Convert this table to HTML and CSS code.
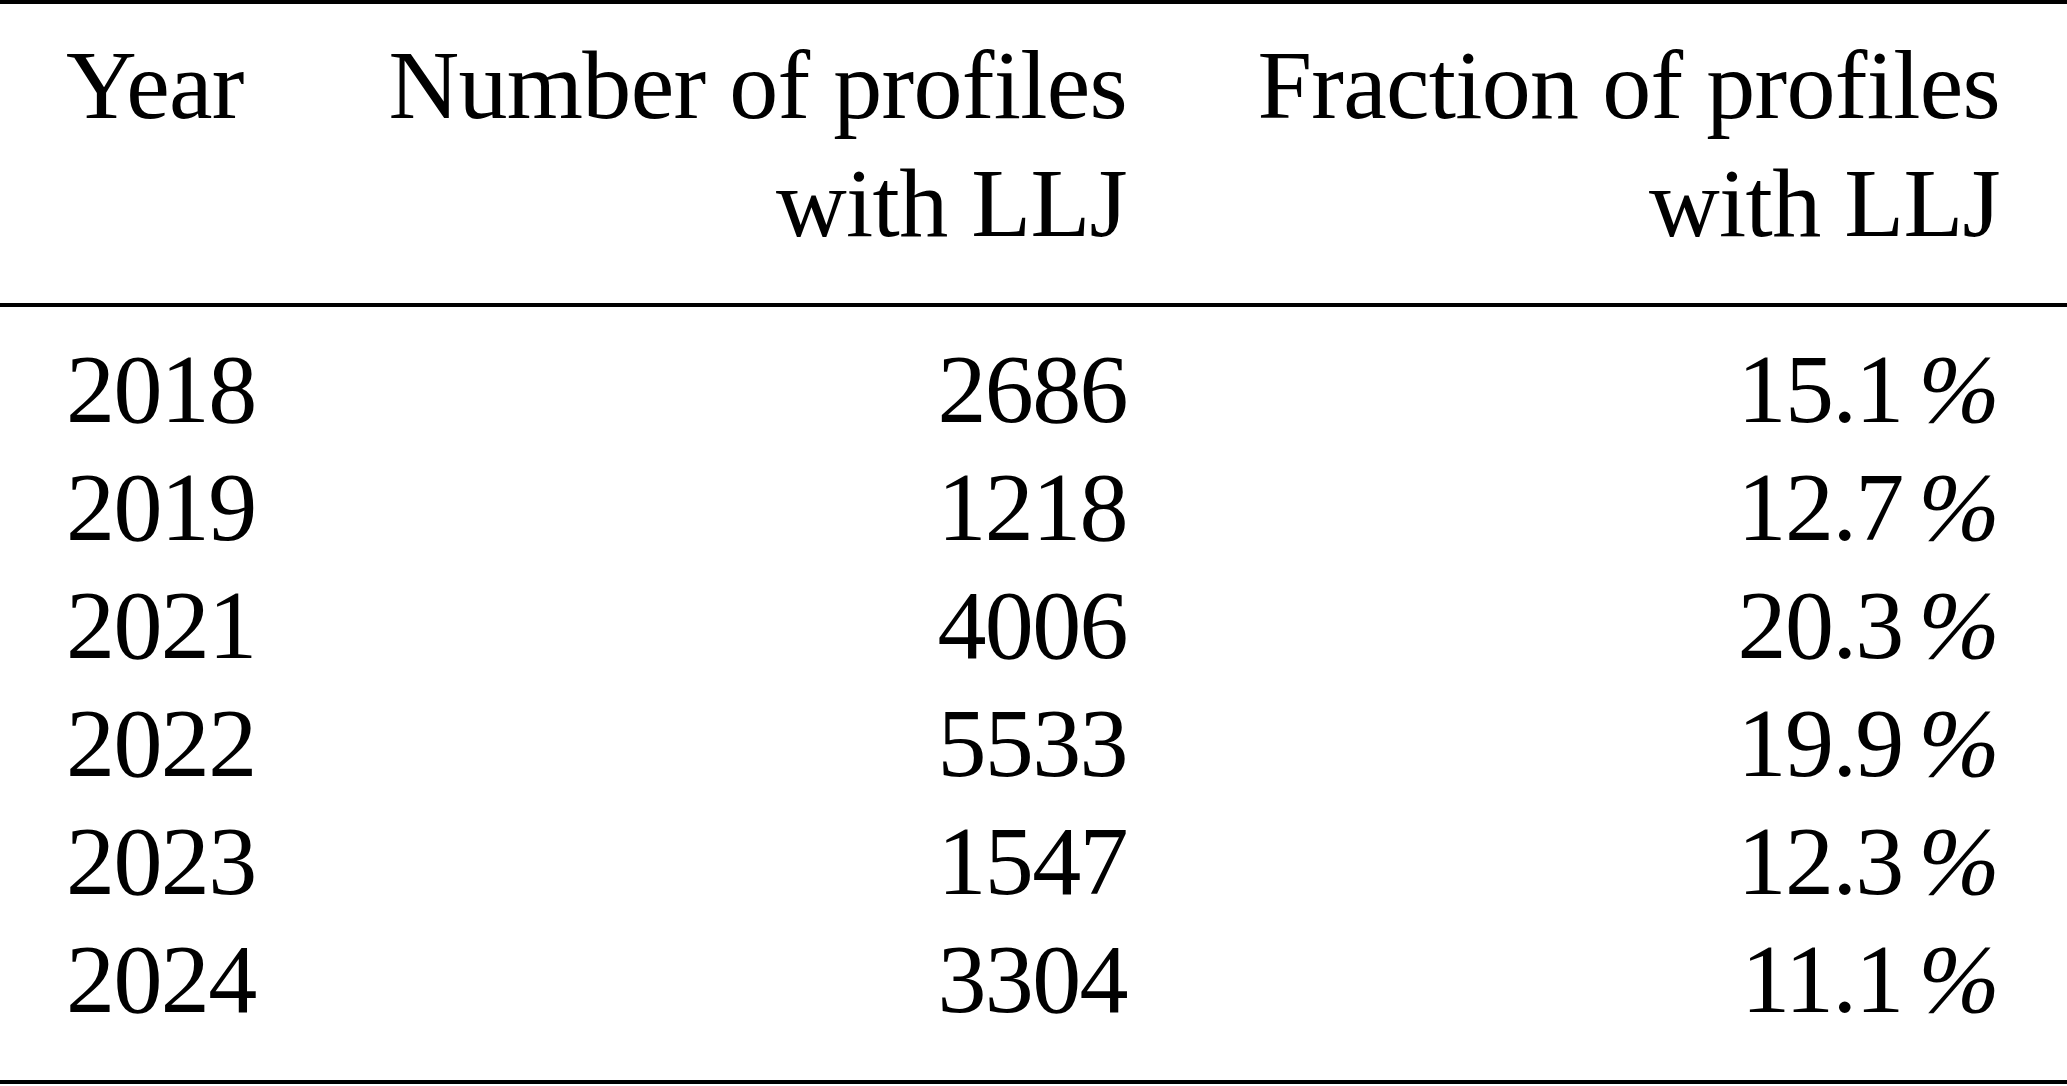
FILE: index.html
```html
<!DOCTYPE html>
<html>
<head>
<meta charset="utf-8">
<link rel="stylesheet" href="styles.css">
</head>
<body>
<div class="table">
  <div class="head">
    <div class="cell left">Year</div>
    <div class="cell right">Number of profiles<br>with LLJ</div>
    <div class="cell right">Fraction of profiles<br>with LLJ</div>
  </div>
  <div class="body">
    <div class="cell left">2018</div><div class="cell right">2686</div><div class="cell right">15.1<span class="unit">%</span></div>
    <div class="cell left">2019</div><div class="cell right">1218</div><div class="cell right">12.7<span class="unit">%</span></div>
    <div class="cell left">2021</div><div class="cell right">4006</div><div class="cell right">20.3<span class="unit">%</span></div>
    <div class="cell left">2022</div><div class="cell right">5533</div><div class="cell right">19.9<span class="unit">%</span></div>
    <div class="cell left">2023</div><div class="cell right">1547</div><div class="cell right">12.3<span class="unit">%</span></div>
    <div class="cell left">2024</div><div class="cell right">3304</div><div class="cell right">11.1<span class="unit">%</span></div>
  </div>
</div>
</body>
</html>
```
FILE: styles.css
```css
html, body {
  margin: 0;
  padding: 0;
  background: #ffffff;
}
.table {
  width: 2067px;
  font-family: "Liberation Serif", "Times New Roman", serif;
  font-size: 98px;
  line-height: 118px;
  color: #000;
  border-top: 4px solid #000;
  border-bottom: 4px solid #000;
}
.head, .body {
  display: grid;
  grid-template-columns: 196px 865px 873px;
  padding-left: 66px;
  padding-right: 67px;
}
.head {
  padding-top: 22px;
  padding-bottom: 41px;
  border-bottom: 4px solid #000;
  letter-spacing: -0.7px;
}
.body {
  padding-top: 23px;
  padding-bottom: 42px;
  letter-spacing: -1.6px;
}
.cell {
  white-space: nowrap;
}
.left {
  text-align: left;
}
.right {
  text-align: right;
}
.unit {
  margin-left: 0.16em;
  font-style: italic;
  letter-spacing: 0;
}
```
